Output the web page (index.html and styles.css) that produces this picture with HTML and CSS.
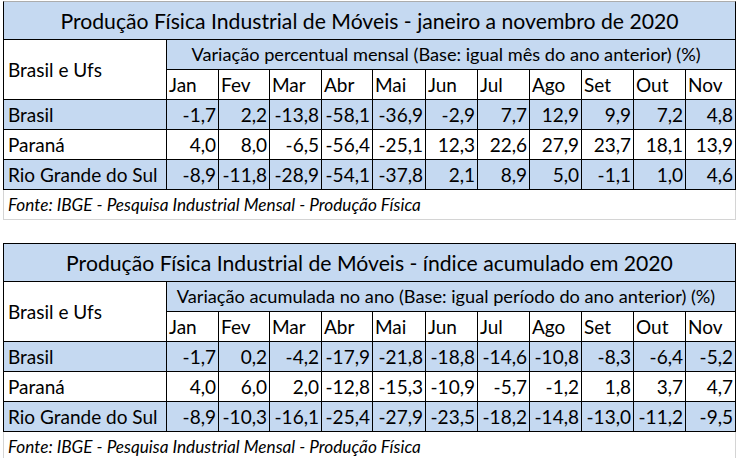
FILE: index.html
```html
<!DOCTYPE html>
<html lang="pt-BR">
<head>
<meta charset="utf-8">
<title>Produção Física Industrial de Móveis</title>
<link rel="stylesheet" href="styles.css">
</head>
<body>
<div class="sheet">
  <div class="tbl first">
    <div class="c title">Produção Física Industrial de Móveis - janeiro a novembro de 2020</div>
    <div class="c label">Brasil e Ufs</div>
    <div class="c sub">Variação percentual mensal (Base: igual mês do ano anterior) (%)</div>
    <div class="c m">Jan</div><div class="c m">Fev</div><div class="c m">Mar</div><div class="c m">Abr</div><div class="c m">Mai</div><div class="c m">Jun</div><div class="c m">Jul</div><div class="c m">Ago</div><div class="c m">Set</div><div class="c m">Out</div><div class="c m">Nov</div>
    <div class="c name blue">Brasil</div><div class="c n blue">-1,7</div><div class="c n blue">2,2</div><div class="c n blue">-13,8</div><div class="c n blue">-58,1</div><div class="c n blue">-36,9</div><div class="c n blue">-2,9</div><div class="c n blue">7,7</div><div class="c n blue">12,9</div><div class="c n blue">9,9</div><div class="c n blue">7,2</div><div class="c n blue">4,8</div>
    <div class="c name">Paraná</div><div class="c n">4,0</div><div class="c n">8,0</div><div class="c n">-6,5</div><div class="c n">-56,4</div><div class="c n">-25,1</div><div class="c n">12,3</div><div class="c n">22,6</div><div class="c n">27,9</div><div class="c n">23,7</div><div class="c n">18,1</div><div class="c n">13,9</div>
    <div class="c name blue">Rio Grande do Sul</div><div class="c n blue">-8,9</div><div class="c n blue">-11,8</div><div class="c n blue">-28,9</div><div class="c n blue">-54,1</div><div class="c n blue">-37,8</div><div class="c n blue">2,1</div><div class="c n blue">8,9</div><div class="c n blue">5,0</div><div class="c n blue">-1,1</div><div class="c n blue">1,0</div><div class="c n blue">4,6</div>
    <div class="c fonte">Fonte: IBGE - Pesquisa Industrial Mensal - Produção Física</div>
  </div>
  <div class="gap"></div>
  <div class="tbl second">
    <div class="c title">Produção Física Industrial de Móveis - índice acumulado em 2020</div>
    <div class="c label">Brasil e Ufs</div>
    <div class="c sub">Variação acumulada no ano (Base: igual período do ano anterior) (%)</div>
    <div class="c m">Jan</div><div class="c m">Fev</div><div class="c m">Mar</div><div class="c m">Abr</div><div class="c m">Mai</div><div class="c m">Jun</div><div class="c m">Jul</div><div class="c m">Ago</div><div class="c m">Set</div><div class="c m">Out</div><div class="c m">Nov</div>
    <div class="c name blue">Brasil</div><div class="c n blue">-1,7</div><div class="c n blue">0,2</div><div class="c n blue">-4,2</div><div class="c n blue">-17,9</div><div class="c n blue">-21,8</div><div class="c n blue">-18,8</div><div class="c n blue">-14,6</div><div class="c n blue">-10,8</div><div class="c n blue">-8,3</div><div class="c n blue">-6,4</div><div class="c n blue">-5,2</div>
    <div class="c name">Paraná</div><div class="c n">4,0</div><div class="c n">6,0</div><div class="c n">2,0</div><div class="c n">-12,8</div><div class="c n">-15,3</div><div class="c n">-10,9</div><div class="c n">-5,7</div><div class="c n">-1,2</div><div class="c n">1,8</div><div class="c n">3,7</div><div class="c n">4,7</div>
    <div class="c name blue">Rio Grande do Sul</div><div class="c n blue">-8,9</div><div class="c n blue">-10,3</div><div class="c n blue">-16,1</div><div class="c n blue">-25,4</div><div class="c n blue">-27,9</div><div class="c n blue">-23,5</div><div class="c n blue">-18,2</div><div class="c n blue">-14,8</div><div class="c n blue">-13,0</div><div class="c n blue">-11,2</div><div class="c n blue">-9,5</div>
    <div class="c fonte">Fonte: IBGE - Pesquisa Industrial Mensal - Produção Física</div>
  </div>
</div>
</body>
</html>
```

FILE: styles.css
```css
* { box-sizing: border-box; }
html, body { margin: 0; padding: 0; background: #ffffff; }
body {
  font-family: Lato, "Open Sans", sans-serif;
  color: #000;
  width: 738px;
  height: 458px;
  overflow: hidden;
}
.sheet {
  padding: 1px 0 0 3px;
}
.tbl {
  display: grid;
  grid-template-columns: 164px 52px 51px 52px 51px 53px 52px 52px 52px 52px 52px 50px;
  width: 733px;
}
.first { grid-template-rows: 39px 30px 30px 30px 30px 30px 30px; }
.second { grid-template-rows: 39px 30px 30px 30px 30px 30px 30px; }
.gap { height: 23px; }

.c {
  display: flex;
  align-items: flex-end;
  border-right: 1px solid #000;
  border-bottom: 1px solid #000;
  font-size: 19px;
  line-height: 1;
  padding: 0 2px 5px 2px;
  white-space: nowrap;
  overflow: hidden;
}
.blue { background: #c5d9f1; }

.title {
  grid-column: 1 / 13;
  background: #c5d9f1;
  border-left: 1px solid #000;
  border-top: 1px solid #acacac;
  justify-content: center;
  align-items: center;
  font-size: 21.2px;
  padding: 2px 0 0 0;
}
.second .title { border-top-color: #000; }

.label {
  grid-row: 2 / 4;
  border-left: 1px solid #000;
  align-items: center;
  padding: 0 0 0 4px;
}
.sub {
  grid-column: 2 / 13;
  background: #c5d9f1;
  justify-content: center;
  padding: 0 10px 6px 0;
  font-size: 18.2px;
}
.m { justify-content: flex-start; }
.name {
  border-left: 1px solid #000;
  padding-left: 4px;
}
.n { justify-content: flex-end; padding-right: 2px; }

.fonte {
  grid-column: 1 / 13;
  border-left: 1px solid #d4d4d4;
  border-right: 1px solid #d4d4d4;
  border-bottom: 1px solid #d4d4d4;
  font-style: italic;
  font-size: 17.2px;
  padding-left: 4px;
  padding-bottom: 6px;
}
```
